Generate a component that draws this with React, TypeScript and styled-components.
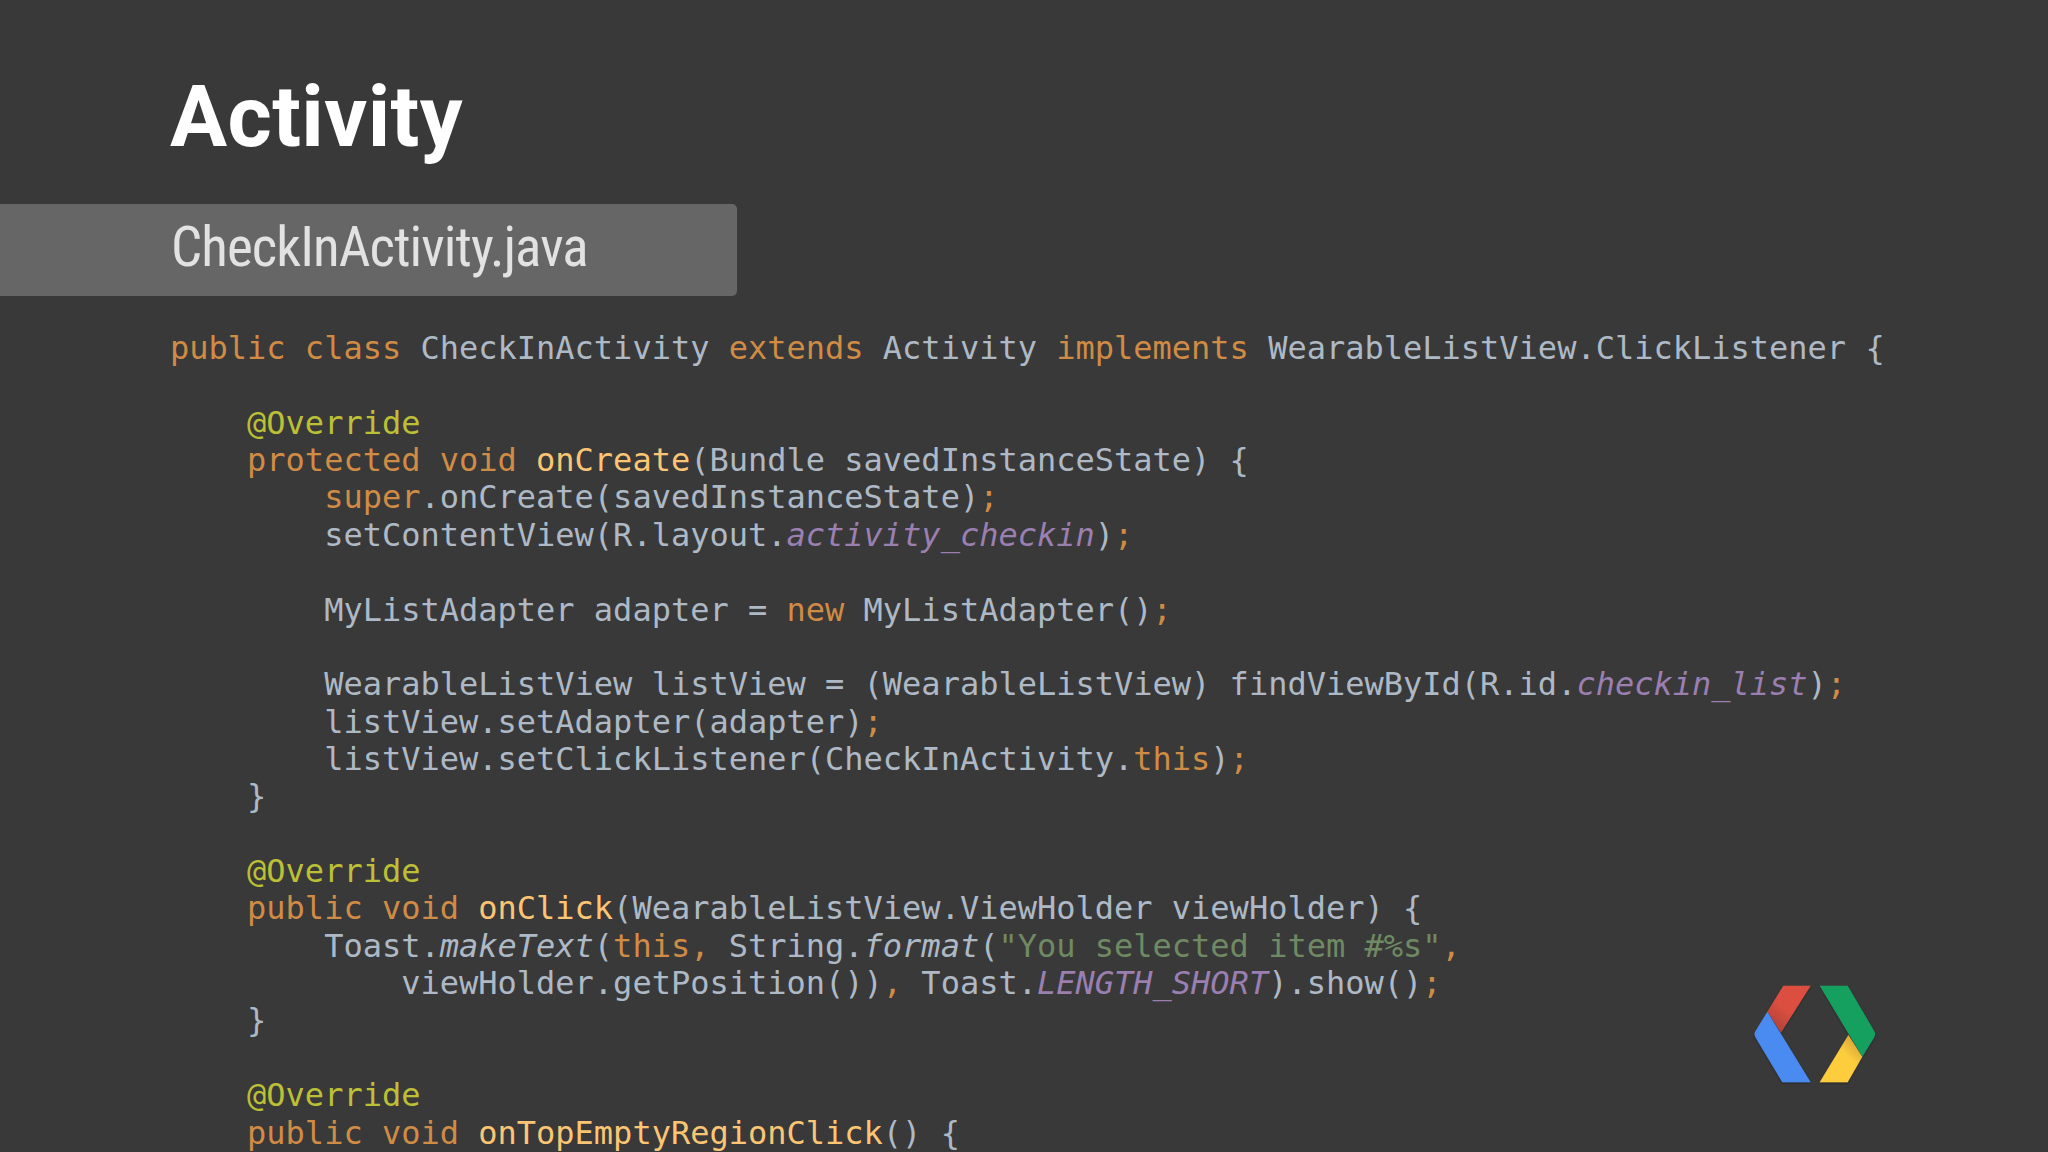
import React from "react";
import styled, { createGlobalStyle } from "styled-components";

const Global = createGlobalStyle`
  html, body { margin: 0; padding: 0; background: #39393a; }
`;

const Slide = styled.main`
  position: relative;
  width: 2048px;
  height: 1152px;
  overflow: hidden;
  background: #39393a;
  display: flex;
  flex-direction: column;
`;

const Title = styled.h1`
  margin: 0;
  padding: 66px 0 0 170px;
  height: 204px;
  box-sizing: border-box;
  font: 700 85px/102px Roboto, "Liberation Sans", sans-serif;
  letter-spacing: 0.4px;
  color: #ffffff;
`;

const FileBar = styled.div`
  width: 737px;
  height: 92px;
  box-sizing: border-box;
  padding: 0 0 5px 171px;
  background: #666666;
  border-radius: 0 5px 5px 0;
  display: flex;
  align-items: center;
`;

const FileName = styled.h2`
  margin: 0;
  font: 400 55px/1 Roboto, "Liberation Sans", sans-serif;
  font-stretch: 75%;
  letter-spacing: -0.9px;
  color: #e2e2e2;
  white-space: nowrap;
`;

const Code = styled.pre`
  margin: 34px 0 0;
  padding-left: 170px;
  font: 400 32px/37.37px "DejaVu Sans Mono", monospace;
  color: #aeb9c5;
`;

const Line = styled.div`
  height: 37.37px;
  white-space: pre;
`;

const colors = {
  k: "#d08b45",
  m: "#fcc573",
  a: "#bdc034",
  f: "#9a7fb0",
  s: "#6f8a62",
  i: "#aeb9c5",
} as const;

type Kind = keyof typeof colors;

const Token = styled.span<{ $kind: Kind }>`
  color: ${(p) => colors[p.$kind]};
  font-style: ${(p) => (p.$kind === "f" || p.$kind === "i" ? "italic" : "normal")};
`;

type Part = string | [Kind, string];

const source: Part[][] = [
  [["k", "public class "], "CheckInActivity ", ["k", "extends "], "Activity ", ["k", "implements "], "WearableListView.ClickListener {"],
  [],
  ["    ", ["a", "@Override"]],
  ["    ", ["k", "protected void "], ["m", "onCreate"], "(Bundle savedInstanceState) {"],
  ["        ", ["k", "super"], ".onCreate(savedInstanceState)", ["k", ";"]],
  ["        setContentView(R.layout.", ["f", "activity_checkin"], ")", ["k", ";"]],
  [],
  ["        MyListAdapter adapter = ", ["k", "new "], "MyListAdapter()", ["k", ";"]],
  [],
  ["        WearableListView listView = (WearableListView) findViewById(R.id.", ["f", "checkin_list"], ")", ["k", ";"]],
  ["        listView.setAdapter(adapter)", ["k", ";"]],
  ["        listView.setClickListener(CheckInActivity.", ["k", "this"], ")", ["k", ";"]],
  ["    }"],
  [],
  ["    ", ["a", "@Override"]],
  ["    ", ["k", "public void "], ["m", "onClick"], "(WearableListView.ViewHolder viewHolder) {"],
  ["        Toast.", ["i", "makeText"], "(", ["k", "this, "], "String.", ["i", "format"], "(", ["s", "\"You selected item #%s\""], ["k", ","]],
  ["            viewHolder.getPosition())", ["k", ", "], "Toast.", ["f", "LENGTH_SHORT"], ").show()", ["k", ";"]],
  ["    }"],
  [],
  ["    ", ["a", "@Override"]],
  ["    ", ["k", "public void "], ["m", "onTopEmptyRegionClick"], "() {"],
];

const LogoMark = styled.svg`
  position: absolute;
  left: 1720px;
  top: 960px;
`;

const Logo = () => (
  <LogoMark width="160" height="140" viewBox="0 0 480 420" aria-label="Google Developers">
    <defs>
      <filter id="lift" x="-10%" y="-10%" width="120%" height="120%">
        <feDropShadow dx="0" dy="3" stdDeviation="3" floodColor="#000" floodOpacity="0.35" />
      </filter>
      <linearGradient id="redFold" gradientUnits="userSpaceOnUse" x1="215" y1="130" x2="165" y2="190">
        <stop offset="0.3" stopColor="#dc5040" />
        <stop offset="1" stopColor="#b8443a" />
      </linearGradient>
      <linearGradient id="yellowFold" gradientUnits="userSpaceOnUse" x1="405" y1="255" x2="365" y2="295">
        <stop offset="0" stopColor="#e0ad38" />
        <stop offset="0.7" stopColor="#fdcd3e" />
      </linearGradient>
    </defs>
    <g filter="url(#lift)">
      <path d="M272 77H190L142 155L183 218Z" fill="url(#redFold)" />
      <path d="M142 155L107 212Q100 222 107 233L187 367H272Z" fill="#4a8bf0" />
      <path d="M385 225L427 290L383 367H299Z" fill="url(#yellowFold)" />
      <path d="M299 77H383L462 212Q469 222 462 233L427 290Z" fill="#18a05f" />
    </g>
  </LogoMark>
);

export default function App() {
  return (
    <Slide>
      <Global />
      <Title>Activity</Title>
      <FileBar>
        <FileName>CheckInActivity.java</FileName>
      </FileBar>
      <Code>
        {source.map((parts, i) => (
          <Line key={i}>
            {parts.map((part, j) =>
              typeof part === "string" ? part : <Token key={j} $kind={part[0]}>{part[1]}</Token>
            )}
          </Line>
        ))}
      </Code>
      <Logo />
    </Slide>
  );
}
